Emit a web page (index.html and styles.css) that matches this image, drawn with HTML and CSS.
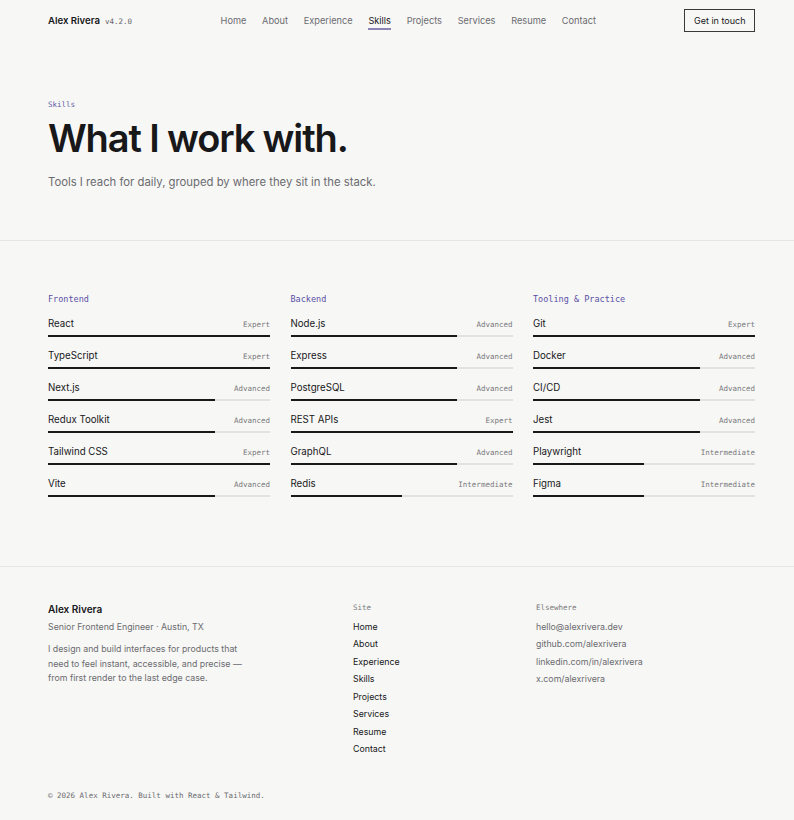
FILE: index.html
```html
<!DOCTYPE html>
<html lang="en">
<head>
<meta charset="utf-8">
<title>Skills — Alex Rivera</title>
<link rel="stylesheet" href="styles.css">
</head>
<body>
<header class="nav">
  <div class="brand"><span class="brand-name">Alex Rivera</span><span class="brand-ver">v4.2.0</span></div>
  <nav class="links">
    <a href="#">Home</a>
    <a href="#">About</a>
    <a href="#">Experience</a>
    <a href="#" class="active">Skills</a>
    <a href="#">Projects</a>
    <a href="#">Services</a>
    <a href="#">Resume</a>
    <a href="#">Contact</a>
  </nav>
  <a href="#" class="cta">Get in touch</a>
</header>

<section class="hero">
  <div class="eyebrow">Skills</div>
  <h1>What I work with.</h1>
  <p class="lede">Tools I reach for daily, grouped by where they sit in the stack.</p>
</section>

<section class="skills">
  <div class="group">
    <h2>Frontend</h2>
    <div class="skill"><div class="row"><span class="name">React</span><span class="level">Expert</span></div><div class="track"><div class="fill" style="width:100%"></div></div></div>
    <div class="skill"><div class="row"><span class="name">TypeScript</span><span class="level">Expert</span></div><div class="track"><div class="fill" style="width:100%"></div></div></div>
    <div class="skill"><div class="row"><span class="name">Next.js</span><span class="level">Advanced</span></div><div class="track"><div class="fill" style="width:75%"></div></div></div>
    <div class="skill"><div class="row"><span class="name">Redux Toolkit</span><span class="level">Advanced</span></div><div class="track"><div class="fill" style="width:75%"></div></div></div>
    <div class="skill"><div class="row"><span class="name">Tailwind CSS</span><span class="level">Expert</span></div><div class="track"><div class="fill" style="width:100%"></div></div></div>
    <div class="skill"><div class="row"><span class="name">Vite</span><span class="level">Advanced</span></div><div class="track"><div class="fill" style="width:75%"></div></div></div>
  </div>
  <div class="group">
    <h2>Backend</h2>
    <div class="skill"><div class="row"><span class="name">Node.js</span><span class="level">Advanced</span></div><div class="track"><div class="fill" style="width:75%"></div></div></div>
    <div class="skill"><div class="row"><span class="name">Express</span><span class="level">Advanced</span></div><div class="track"><div class="fill" style="width:75%"></div></div></div>
    <div class="skill"><div class="row"><span class="name">PostgreSQL</span><span class="level">Advanced</span></div><div class="track"><div class="fill" style="width:75%"></div></div></div>
    <div class="skill"><div class="row"><span class="name">REST APIs</span><span class="level">Expert</span></div><div class="track"><div class="fill" style="width:100%"></div></div></div>
    <div class="skill"><div class="row"><span class="name">GraphQL</span><span class="level">Advanced</span></div><div class="track"><div class="fill" style="width:75%"></div></div></div>
    <div class="skill"><div class="row"><span class="name">Redis</span><span class="level">Intermediate</span></div><div class="track"><div class="fill" style="width:50%"></div></div></div>
  </div>
  <div class="group">
    <h2>Tooling &amp; Practice</h2>
    <div class="skill"><div class="row"><span class="name">Git</span><span class="level">Expert</span></div><div class="track"><div class="fill" style="width:100%"></div></div></div>
    <div class="skill"><div class="row"><span class="name">Docker</span><span class="level">Advanced</span></div><div class="track"><div class="fill" style="width:75%"></div></div></div>
    <div class="skill"><div class="row"><span class="name">CI/CD</span><span class="level">Advanced</span></div><div class="track"><div class="fill" style="width:75%"></div></div></div>
    <div class="skill"><div class="row"><span class="name">Jest</span><span class="level">Advanced</span></div><div class="track"><div class="fill" style="width:75%"></div></div></div>
    <div class="skill"><div class="row"><span class="name">Playwright</span><span class="level">Intermediate</span></div><div class="track"><div class="fill" style="width:50%"></div></div></div>
    <div class="skill"><div class="row"><span class="name">Figma</span><span class="level">Intermediate</span></div><div class="track"><div class="fill" style="width:50%"></div></div></div>
  </div>
</section>

<footer class="footer">
  <div class="foot-grid">
    <div class="about">
      <div class="f-name">Alex Rivera</div>
      <div class="f-role">Senior Frontend Engineer · Austin, TX</div>
      <p class="f-bio">I design and build interfaces for products that need to feel instant, accessible, and precise — from first render to the last edge case.</p>
    </div>
    <div class="f-col">
      <div class="f-head">Site</div>
      <a href="#">Home</a>
      <a href="#">About</a>
      <a href="#">Experience</a>
      <a href="#">Skills</a>
      <a href="#">Projects</a>
      <a href="#">Services</a>
      <a href="#">Resume</a>
      <a href="#">Contact</a>
    </div>
    <div class="f-col muted">
      <div class="f-head">Elsewhere</div>
      <a href="#">hello@alexrivera.dev</a>
      <a href="#">github.com/alexrivera</a>
      <a href="#">linkedin.com/in/alexrivera</a>
      <a href="#">x.com/alexrivera</a>
    </div>
  </div>
  <div class="copy">© 2026 Alex Rivera. Built with React &amp; Tailwind.</div>
</footer>
</body>
</html>
```
FILE: styles.css
```css
* { box-sizing: border-box; }
html, body { margin: 0; padding: 0; }
body {
  background: #f7f7f5;
  color: #18181b;
  font-family: Inter, "Noto Sans", sans-serif;
  -webkit-font-smoothing: antialiased;
}
a { color: inherit; text-decoration: none; }

.nav {
  display: flex;
  align-items: center;
  justify-content: space-between;
  padding: 0 39px 0 48px;
  height: 41px;
}
.brand { display: flex; align-items: baseline; gap: 5px; }
.brand-name { font-size: 9.6px; font-weight: 600; }
.brand-ver { font-family: "DejaVu Sans Mono", monospace; font-size: 7.5px; color: #66666b; }
.links { display: flex; gap: 15.8px; }
.links a { font-size: 9.2px; color: #6b6b70; padding: 3px 0 2px; border-bottom: 2px solid transparent; }
.links a.active { color: #18181b; border-bottom-color: #8b85b5; }
.cta {
  font-size: 9px;
  border: 1px solid #3a3a3d;
  padding: 0 8.5px;
  height: 23px;
  display: flex;
  align-items: center;
}

.hero {
  padding: 59px 39px 0 48px;
  height: 200px;
  border-bottom: 1px solid #e5e5e2;
}
.eyebrow { font-family: "DejaVu Sans Mono", monospace; font-size: 7.5px; color: #6358a8; }
h1 {
  margin: 10px 0 0;
  font-size: 38px;
  font-weight: 600;
  letter-spacing: -0.03em;
  line-height: 1;
}
.lede { margin: 18px 0 0; font-size: 11.3px; color: #6b6b70; }

.skills {
  display: grid;
  grid-template-columns: repeat(3, 1fr);
  gap: 20.5px;
  padding: 53px 39px 0 48px;
  height: 326px;
  border-bottom: 1px solid #e5e5e2;
}
.group h2 {
  margin: 0 0 14px;
  font-family: "DejaVu Sans Mono", monospace;
  font-size: 8.5px;
  font-weight: 500;
  color: #5a4fa5;
}
.skill { margin-bottom: 13px; }
.row { display: flex; justify-content: space-between; align-items: baseline; height: 17px; }
.name { font-size: 9.7px; }
.level { font-family: "DejaVu Sans Mono", monospace; font-size: 7.5px; color: #77777c; }
.track { height: 2px; background: #e2e2e0; }
.fill { height: 2px; background: #18181b; }

.footer { padding: 36px 39px 0 48px; }
.foot-grid { display: grid; grid-template-columns: 257px 135px 1fr; gap: 48px; }
.f-name { font-size: 10px; font-weight: 600; }
.f-role { font-size: 8.8px; color: #6b6b70; margin-top: 6px; }
.f-bio { font-size: 8.8px; color: #6b6b70; line-height: 14.5px; margin: 10px 0 0; max-width: 200px; }
.f-col { display: flex; flex-direction: column; gap: 5.5px; }
.f-head { font-family: "DejaVu Sans Mono", monospace; font-size: 7.5px; color: #77777c; margin-bottom: 3px; }
.f-col a { font-size: 8.8px; line-height: 12px; }
.f-col.muted a { color: #6b6b70; }
.copy { font-family: "DejaVu Sans Mono", monospace; font-size: 7.5px; color: #6b6b70; margin-top: 36px; }
```
